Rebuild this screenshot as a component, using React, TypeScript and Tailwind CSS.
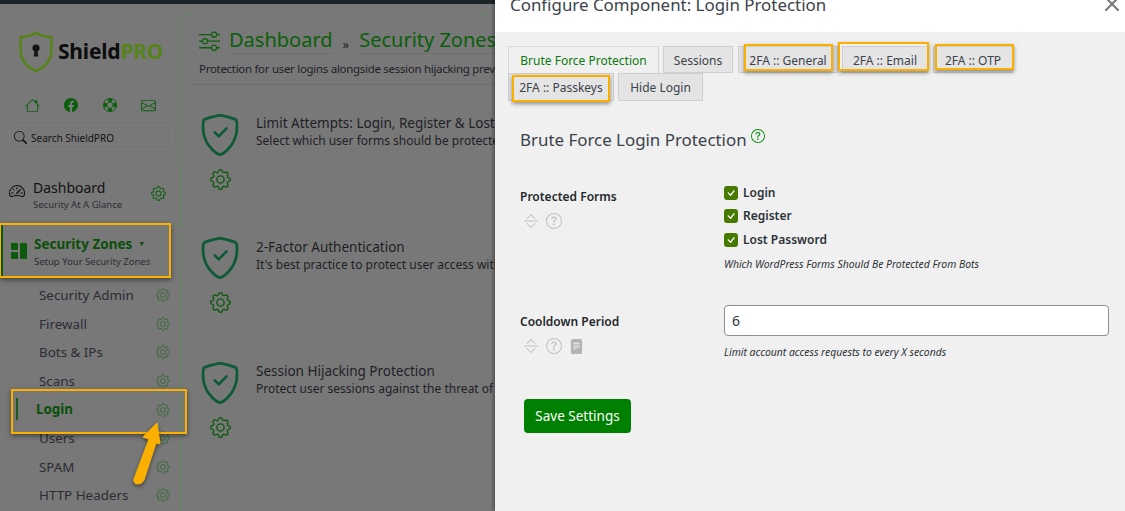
import {
  BsChevronBarExpand,
  BsEnvelope,
  BsFacebook,
  BsFileTextFill,
  BsGear,
  BsGrid1X2Fill,
  BsHouse,
  BsLifePreserver,
  BsCheck,
  BsQuestionCircle,
  BsSearch,
  BsShieldCheck,
  BsSliders,
  BsSpeedometer2,
  BsX,
} from "react-icons/bs";

const FONT = "font-['Noto_Sans','Open_Sans',sans-serif]";

function NavRow({ label, active }: { label: string; active?: boolean }) {
  return (
    <div className="relative flex h-[28.6px] items-center justify-between pl-[39px] pr-[10px]">
      {active && <span className="absolute left-[16px] top-[3px] h-[22px] w-[2px] bg-[#1c5a1c]" />}
      <span className={active ? "-ml-[3px] -mt-[1px] text-[13.4px] font-bold text-[#0b4f0b]" : "text-[13.4px] text-[#2c2c34]"}>{label}</span>
      <BsGear className="text-[14px] text-[#3f6b3f]" />
    </div>
  );
}

function Zone({ title, text, className, textClass }: { title: string; text: string; className: string; textClass: string }) {
  return (
    <div className={`-ml-[7px] flex ${className}`}>
      <div className="flex w-[74px] shrink-0 flex-col items-center pl-[2px]">
        <BsShieldCheck className="text-[42px] text-[#0c5a36]" />
        <BsGear className="mt-[13px] text-[21px] text-[#0b5a0b]" />
      </div>
      <div className={`whitespace-nowrap text-[13px] leading-[17px] text-[#1f1f26] ${textClass}`}>
        <div className="text-[13.5px]">{title}</div>
        <div className="text-[12px]">{text}</div>
      </div>
    </div>
  );
}

function Tab({ label, className }: { label: string; className: string }) {
  return (
    <div className={`flex items-center justify-center border border-[#cfcfcf] bg-[#e4e4e4] pt-[2px] text-[12px] text-[#3c434a] ${className}`}>
      {label}
    </div>
  );
}

function Check({ label }: { label: string }) {
  return (
    <div className="flex h-[23.5px] items-center gap-[5px] text-[12px] font-semibold text-[#2c3338]">
      <span className="flex h-[14px] w-[14px] items-center justify-center rounded-[3px] bg-[#467a00] text-white">
        <BsCheck className="text-[14px]" />
      </span>
      {label}
    </div>
  );
}

function ShieldLogo() {
  return (
    <svg className="h-[42px] w-[34px] shrink-0" viewBox="0 0 34 42">
      <path
        d="M17 1.8C22 4.6 27 5.8 32.3 6.2V20C32.3 30 25 36.4 17 40.2C9 36.4 1.7 30 1.7 20V6.2C7 5.8 12 4.6 17 1.8Z"
        fill="none"
        stroke="#56831a"
        strokeWidth="2.6"
      />
      <circle cx="17" cy="17" r="3.6" fill="#141414" />
      <path d="M15.6 18H18.4L19.2 25.5H14.8Z" fill="#141414" />
    </svg>
  );
}

export default function App() {
  return (
    <div className={`relative flex h-[511px] w-[1125px] overflow-hidden bg-[#f0f0f0] ${FONT}`}>
      {/* dimmed page behind the modal */}
      <div className="flex w-[495px] shrink-0 flex-col overflow-hidden bg-[#787878]">
        <div className="h-[4px] shrink-0 bg-[#1d2327]" />
        <div className="flex min-h-0 flex-1">
          <aside className="w-[181px] shrink-0">
            <div className="flex h-[88px] items-center gap-[5px] pl-[19px] pt-[7px]">
              <ShieldLogo />
              <span className="text-[21px] font-bold tracking-[-0.2px] text-[#0d0d0d]">
                Shield<span className="text-[#56831a]">PRO</span>
              </span>
            </div>
            <div className="flex h-[31px] items-center pb-[5px] pl-[25px] text-[#0b5f0b]">
              <BsHouse className="text-[15px]" />
              <BsFacebook className="ml-[24px] text-[14px]" />
              <BsLifePreserver className="ml-[25px] text-[14px]" />
              <BsEnvelope className="ml-[24px] text-[15px]" />
            </div>
            <div className="ml-[9px] mt-[2px] flex h-[25px] w-[163px] items-center gap-[4px] rounded-[6px] border border-[#7f7f7f] pl-[4px] text-[10px] text-[#141414]">
              <BsSearch className="text-[13px]" />
              <span className="pt-[2px]">Search ShieldPRO</span>
            </div>
            <div className="mt-[20px] flex h-[55px] items-center border-r border-b border-[#6b856b] pl-[9px] pr-[14px]">
              <BsSpeedometer2 className="-mt-[12px] text-[16px] text-[#111]" />
              <div className="-mt-[2px] ml-[8px] flex-1">
                <div className="text-[14px] leading-[18px] text-[#111]">Dashboard</div>
                <div className="text-[9.5px] leading-[16px] text-[#2c2c34]">Security At A Glance</div>
              </div>
              <BsGear className="-mt-[8px] text-[15px] text-[#0b5f0b]" />
            </div>
            <div className="flex h-[52px] items-center pl-[11px]">
              <BsGrid1X2Fill className="-scale-x-100 text-[16px] text-[#0b5a0b]" />
              <div className="ml-[7px]">
                <div className="flex items-center gap-[6px] text-[13.5px] font-bold leading-[20px] text-[#0b4f0b]">
                  Security Zones <span className="text-[7px]">▼</span>
                </div>
                <div className="text-[9.5px] leading-[15px] text-[#2c2c34]">Setup Your Security Zones</div>
              </div>
            </div>
            <div className="border-r border-[#6b856b] pt-[4px]">
              <NavRow label="Security Admin" />
              <NavRow label="Firewall" />
              <NavRow label="Bots & IPs" />
              <NavRow label="Scans" />
              <NavRow label="Login" active />
              <NavRow label="Users" />
              <NavRow label="SPAM" />
              <NavRow label="HTTP Headers" />
            </div>
          </aside>

          <main className="mt-[9px] min-w-0 flex-1 overflow-hidden border-l border-t border-[#6b856b] pl-[7px]">
            <div className="flex h-[40px] items-end whitespace-nowrap pl-[10px]">
              <BsSliders className="mb-[3px] shrink-0 text-[21px] text-[#0b5f0b]" />
              <span className="ml-[9px] border-b border-[#6e6e6e] text-[20px] leading-[27px] text-[#0b5f0b]">Dashboard</span>
              <span className="mx-[10px] text-[13px] text-[#222]">»</span>
              <span className="border-b border-[#6e6e6e] text-[20px] leading-[27px] text-[#0b5f0b]">Security Zones</span>
            </div>
            <div className="flex h-[31px] items-center whitespace-nowrap border-b border-[#6e6e6e] pl-[10px] text-[11.5px] tracking-[-0.3px] text-[#1f1f26]">
              Protection for user logins alongside session hijacking prevention
            </div>
            <Zone className="mt-[29px]" textClass="pt-[1px]" title="Limit Attempts: Login, Register & Lost" text="Select which user forms should be protected" />
            <Zone className="mt-[47px]" textClass="pt-[2px]" title="2-Factor Authentication" text="It's best practice to protect user access with" />
            <Zone className="mt-[49px]" textClass="pt-[1px]" title="Session Hijacking Protection" text="Protect user sessions against the threat of hijacking" />
          </main>
        </div>
      </div>

      {/* modal */}
      <div className="flex min-w-0 flex-1 flex-col shadow-[-2px_0_3px_rgba(0,0,0,0.3)]">
        <div className="flex h-[32px] shrink-0 items-start justify-between bg-white pl-[15px]">
          <div className="-mt-[7px] text-[16.9px] leading-[24px] text-[#3c434a]">Configure Component: Login Protection</div>
          <BsX className="-mr-[3px] -mt-[12px] text-[32px] text-[#777]" />
        </div>
        <div className="flex-1 pl-[13px]">
          <div className="mt-[14px] flex h-[27px] gap-[4px]">
            <div className="flex w-[151px] items-center justify-center border border-b-0 border-[#d8d8d8] bg-[#f0f0f0] pt-[2px] text-[12px] text-[#0b7a0b]">
              Brute Force Protection
            </div>
            <Tab label="Sessions" className="w-[70px]" />
            <Tab label="2FA :: General" className="ml-[1px] w-[100px]" />
            <Tab label="2FA :: Email" className="w-[86px]" />
            <Tab label="2FA :: OTP" className="ml-[1px] w-[80px]" />
          </div>
          <div className="flex h-[28px] gap-[4px]">
            <Tab label="2FA :: Passkeys" className="w-[106px]" />
            <Tab label="Hide Login" className="w-[85px]" />
          </div>

          <div className="ml-[12px] mt-[25px] flex items-start text-[16.9px] leading-[28px] text-[#3c434a]">
            Brute Force Login Protection
            <BsQuestionCircle className="ml-[4px] mt-[3px] text-[14px] text-[#0b8a0b]" />
          </div>

          <div className="ml-[12px] mt-[27px] flex h-[100px]">
            <div className="w-[204px] pt-[7px]">
              <div className="text-[12px] font-semibold leading-[18px] text-[#23282d]">Protected Forms</div>
              <div className="mt-[7px] flex items-center gap-[7px] pl-[3px] text-[#c0c0c0]">
                <BsChevronBarExpand className="text-[16px]" />
                <BsQuestionCircle className="text-[16px]" />
              </div>
            </div>
            <div>
              <Check label="Login" />
              <Check label="Register" />
              <Check label="Lost Password" />
              <div className="mt-[4px] text-[10.4px] italic leading-[16px] text-[#2c3338]">Which WordPress Forms Should Be Protected From Bots</div>
            </div>
          </div>

          <div className="ml-[12px] mt-[24px] flex">
            <div className="w-[204px] pt-[8px]">
              <div className="text-[12px] font-semibold leading-[18px] text-[#23282d]">Cooldown Period</div>
              <div className="mt-[7px] flex items-center gap-[7px] pl-[3px] text-[#c0c0c0]">
                <BsChevronBarExpand className="text-[16px]" />
                <BsQuestionCircle className="text-[16px]" />
                <BsFileTextFill className="text-[15px] text-[#b4b4b4]" />
              </div>
            </div>
            <div>
              <div className="flex h-[31px] w-[385px] items-center rounded-[4px] border border-[#8c8f94] bg-white pl-[7px] text-[14px] text-[#2c3338]">6</div>
              <div className="mt-[8px] text-[10.4px] italic leading-[16px] text-[#2c3338]">Limit account access requests to every X seconds</div>
            </div>
          </div>

          <button className="ml-[16px] mt-[39px] flex h-[34px] w-[107px] items-center justify-center rounded-[4px] bg-[#008000] text-[13.5px] text-white">
            Save Settings
          </button>
        </div>
      </div>

      {/* orange annotation boxes */}
      <div className="absolute left-0 top-[223px] h-[55px] w-[171px] border-2 border-[#fbb000] shadow-[0_2px_5px_rgba(0,0,0,0.45)]" />
      <div className="absolute left-[1px] top-[225px] h-[51px] w-[2px] bg-[#0b5a0b]" />
      <div className="absolute left-[11px] top-[389px] h-[45px] w-[176px] border-2 border-[#fbb000] shadow-[0_2px_5px_rgba(0,0,0,0.45)]" />
      <div className="absolute left-[744px] top-[44px] h-[27px] w-[89px] border-2 border-[#fbb000] shadow-[0_2px_4px_rgba(0,0,0,0.4)]" />
      <div className="absolute left-[838px] top-[42px] h-[29px] w-[91px] border-2 border-[#fbb000] shadow-[0_2px_4px_rgba(0,0,0,0.4)]" />
      <div className="absolute left-[935px] top-[44px] h-[26px] w-[79px] border-2 border-[#fbb000] shadow-[0_2px_4px_rgba(0,0,0,0.4)]" />
      <div className="absolute left-[512px] top-[75px] h-[27px] w-[98px] border-2 border-[#fbb000] shadow-[0_2px_4px_rgba(0,0,0,0.4)]" />
      <svg className="absolute left-[125px] top-[418px] h-[75px] w-[45px] drop-shadow-[0_2px_2px_rgba(0,0,0,0.45)]" viewBox="0 0 45 75">
        <path d="M32 5L18 19L24 21L9 61Q8 66 13 66Q17 66 19 62L31 25L35 26Z" fill="#fbb000" stroke="#fbb000" strokeLinejoin="round" />
      </svg>
    </div>
  );
}
